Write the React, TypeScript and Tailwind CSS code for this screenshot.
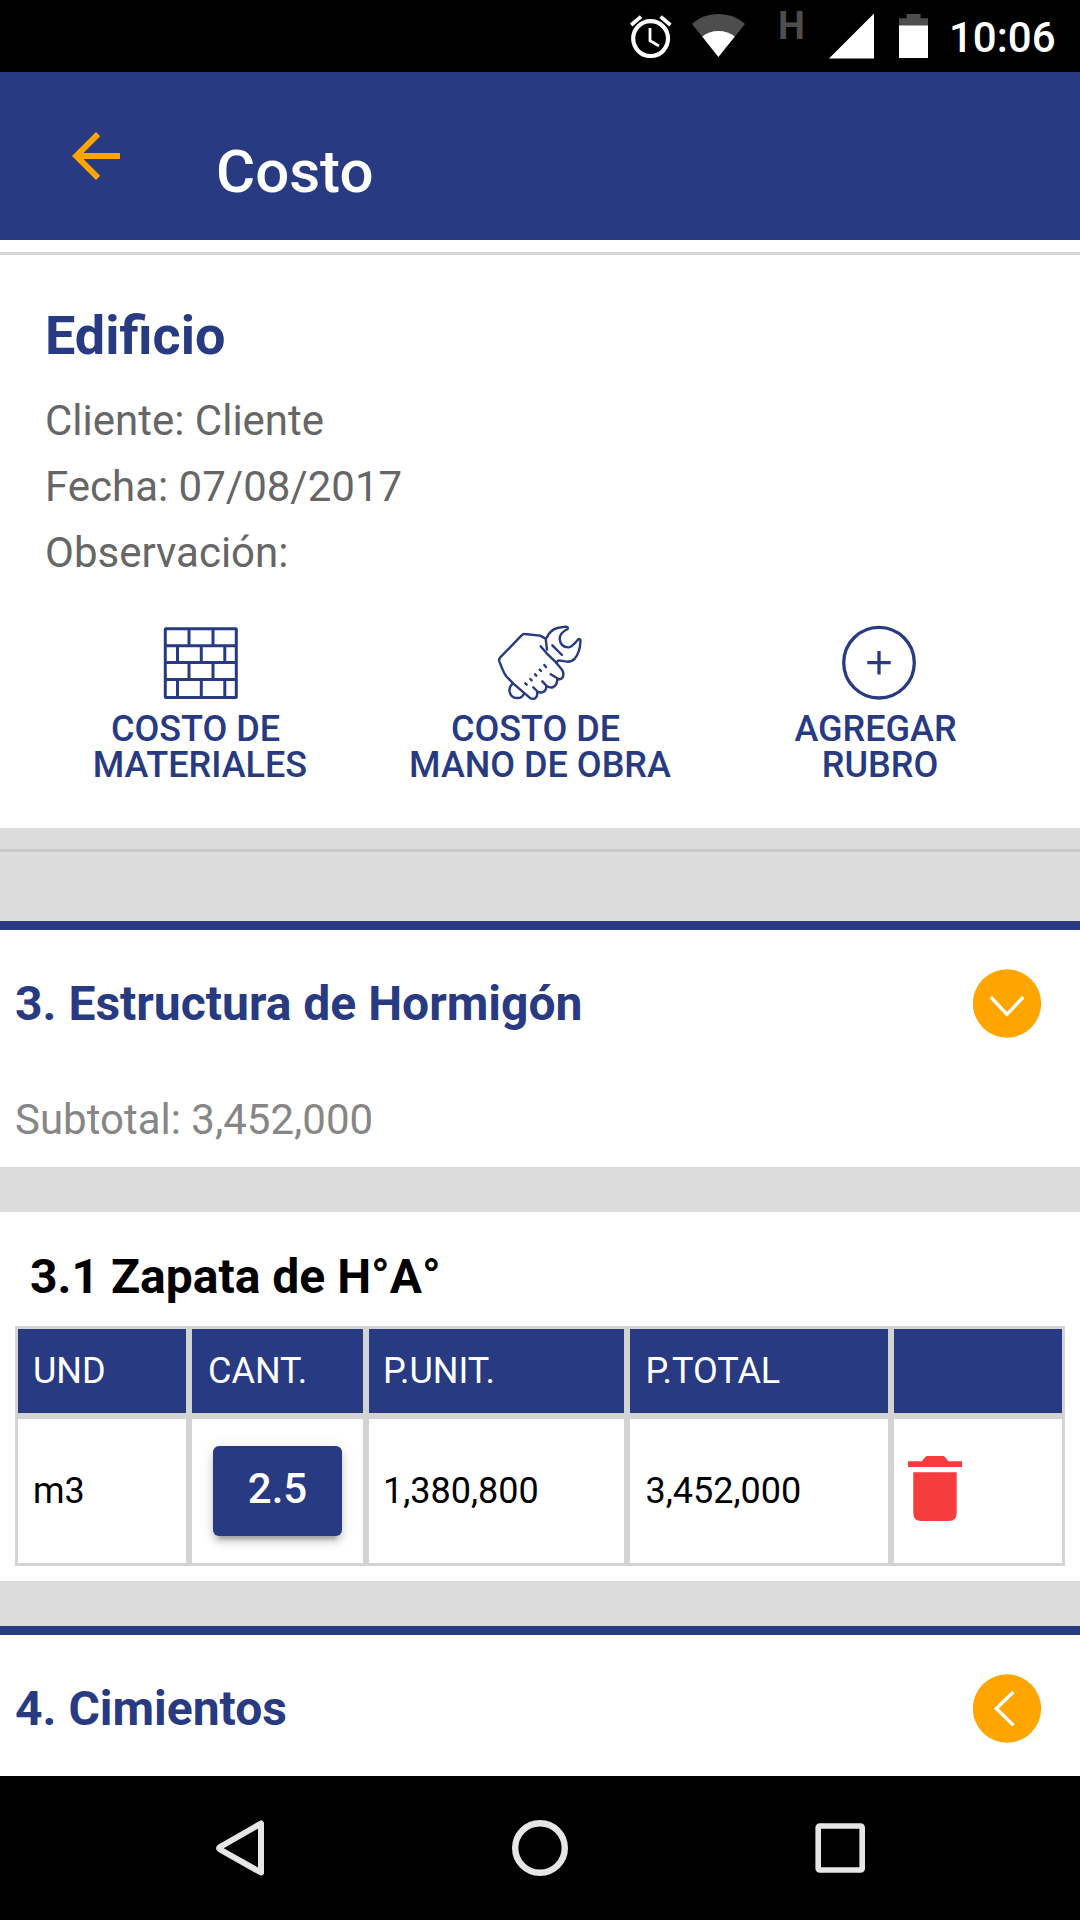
import React from "react";

const WHITE_ROW = "flex items-center justify-between bg-white pl-[15px] pr-[38px]";

function StatusBar() {
  return (
    <div className="flex h-[72px] items-start bg-black pl-[630px] text-white">
      <svg className="mt-[15px] h-[43px] w-[42px] shrink-0" viewBox="630 15 42 43" fill="none">
        <circle cx="650.6" cy="38.6" r="17.4" stroke="#fff" strokeWidth="4.2" />
        <path d="M650 28v12.8l9 5.2" stroke="#fff" strokeWidth="2.8" />
        <path d="M630 23.6l9.8-8.4 2.4 2.8-9.8 8.4zM671.6 23.6l-9.8-8.4-2.4 2.8 9.8 8.4z" fill="#fff" />
      </svg>
      <svg className="ml-[20px] mt-[14px] h-[43px] w-[53px] shrink-0" viewBox="692 14 53 43">
        <path d="M718.4 57L692 24C699 17.500 708 14 718.400 14S738 17.500 745 24z" fill="#4d4d4d" />
        <path d="M718.4 57L702.300 36.500C706.500 33 712 31 718.400 31S730.500 33 734.800 36.500z" fill="#fff" />
      </svg>
      <span className="ml-[33px] mt-[4px] w-[27px] shrink-0 text-[38px] font-bold leading-[45px] text-[#4d4d4d]">H</span>
      <svg className="ml-[24px] mt-[13px] h-[46px] w-[45px] shrink-0" viewBox="829 13 45 46">
        <path d="M829 58.500H874V13.500z" fill="#fff" />
      </svg>
      <svg className="ml-[25px] mt-[14px] h-[44px] w-[29px] shrink-0" viewBox="899 14 29 44">
        <path d="M899 26V18.300h7.500V14h14v4.300h7.500V26z" fill="#4d4d4d" />
        <path d="M899 25.500h29V58H899z" fill="#fff" />
      </svg>
      <span className="ml-[21px] mt-[13px] text-[42px] font-medium leading-[49px]">10:06</span>
    </div>
  );
}

function BrickIcon() {
  return (
    <svg className="h-[78px] w-[76px]" viewBox="0 0 76 78" fill="none" stroke="#283a82" strokeWidth="3">
      <rect x="3.300" y="5.800" width="71" height="68.700" rx="0.500" />
      <path d="M3.500 22.700h71M3.500 39.500h71M3.500 56.500h71" />
      <path d="M27 5.500v17M51 5.500v17M15.500 22.500v17M39.300 22.500v17M62.800 22.500v17M27 39.500v17M51 39.500v17M15.500 56.500v18M39.300 56.500v18M62.800 56.500v18" />
    </svg>
  );
}

function HandIcon() {
  return (
    <svg
      className="h-[78px] w-[88px]"
      viewBox="320 69 264 234"
      fill="none"
      stroke="#283a82"
      strokeWidth="7.200"
      strokeLinecap="round"
      strokeLinejoin="round"
    >
      <path d="M454 139L472 160L497 184L518 209Q525 221 520 232Q514 241 504 235L484 223M504 235Q504 256 492 261Q481 265 471 257L459 244M471 257Q472 274 458 277Q449 279 443 273L432 262M443 273Q446 289 437 295Q429 299 421 293L371 250L350 228Q342 216 330 184Q328 178 332 173L396 107Q401 101 407 102L452 107L469 116L473 149" />
      <path d="M371 250Q358 260 361 276Q366 296 385 294Q398 294 404 281" />
      <path d="M472 113Q482 90 504 84L528 80Q538 80 535 87Q512 98 511 116Q513 143 539 142Q548 140 556 130L568 117Q575 116 573 129Q571 157 557 175Q547 186 533 185L508 181L500 188" />
      <path d="M489 136L518 165" />
      <path d="M408 250l4 4M423 237l4 4M437 223l4 4M451 209l4 4M465 195l5 6" />
    </svg>
  );
}

function PlusIcon() {
  return (
    <svg className="h-[78px] w-[76px]" viewBox="0 0 76 78" fill="none" stroke="#283a82" strokeWidth="3.300">
      <circle cx="37" cy="39.700" r="35.300" />
      <path d="M37 28v23.500M25.300 39.700h23.400" />
    </svg>
  );
}

function Action({ icon, first, second }: { icon: React.ReactNode; first: string; second: string }) {
  return (
    <button className="flex w-[340px] flex-col items-center text-[36px] font-medium leading-[36px] text-[#283a82]">
      {icon}
      <span className="mt-[10px] whitespace-pre">{first + "\u00a0"}</span>
      <span>{second}</span>
    </button>
  );
}

function Toggle({ open }: { open: boolean }) {
  return (
    <svg className="h-[69px] w-[69px]" viewBox="0 0 69 69" fill="none" stroke="#fff" strokeWidth="3.300">
      <circle cx="34" cy="34.500" r="34.200" fill="#ffa500" stroke="none" />
      <path d={open ? "M17.700 28L34 45.300L50.300 28" : "M40.400 18L23.300 34.500L40.400 51.300"} />
    </svg>
  );
}

function Cell({ children, head }: { children?: React.ReactNode; head?: boolean }) {
  return (
    <div
      className={
        head
          ? "flex h-[84px] items-center bg-[#283a82] pl-[15px] text-white"
          : "flex h-[144px] items-center bg-white pl-[15px] text-black"
      }
    >
      {children}
    </div>
  );
}

export default function App() {
  return (
    <div className="flex h-[1920px] w-[1080px] flex-col overflow-hidden bg-white font-['Roboto',sans-serif]">
      <StatusBar />
      <header className="flex h-[168px] items-start bg-[#283a82] pl-[60px]">
        <svg className="mt-12 h-[72px] w-[72px]" viewBox="0 0 24 24" fill="#ffa500">
          <path d="M20 11H7.830l5.590-5.590L12 4l-8 8 8 8 1.410-1.410L7.830 13H20v-2z" />
        </svg>
        <h1 className="ml-[84px] mt-[65px] text-[60px] font-medium leading-[70px] text-white">Costo</h1>
      </header>
      <div className="mt-3 h-[3px] bg-[#d5d5d5]" />

      <section className="flex h-[573px] flex-col">
        <div className="px-[45px] pt-[49px]">
          <h2 className="text-[54px] font-bold leading-[64px] text-[#283a82]">Edificio</h2>
          <div className="mt-[20px] text-[42px] leading-[66px] text-[#666666]">
            <p>Cliente: Cliente</p>
            <p>Fecha: 07/08/2017</p>
            <p>Observación:</p>
          </div>
        </div>
        <div className="mt-[37px] flex px-[30px]">
          <Action icon={<BrickIcon />} first="COSTO DE" second="MATERIALES" />
          <Action icon={<HandIcon />} first="COSTO DE" second="MANO DE OBRA" />
          <Action icon={<PlusIcon />} first="AGREGAR" second="RUBRO" />
        </div>
      </section>

      <div className="h-[93px] bg-[#dcdcdc] pt-[21px]">
        <div className="h-[3px] bg-[#c9c9c9]" />
      </div>

      <section className="h-[246px] border-t-[9px] border-[#283a82]">
        <div className={WHITE_ROW + " h-[147px]"}>
          <h3 className="text-[48px] font-bold leading-[56px] text-[#283a82]">3. Estructura de Hormigón</h3>
          <Toggle open />
        </div>
        <p className="mt-[18px] pl-[15px] text-[42px] leading-[50px] text-[#868686]">Subtotal: 3,452,000</p>
      </section>
      <div className="h-[45px] bg-[#dcdcdc]" />

      <section className="h-[369px] px-[15px]">
        <h4 className="pl-[15px] pt-[37px] text-[48px] font-bold leading-[56px] text-black">3.1 Zapata de H°A°</h4>
        <div className="mt-[21px] grid grid-cols-[168px_171px_255px_258px_168px] gap-[6px] border-[3px] border-[#d3d3d3] bg-[#d3d3d3] text-[36px] leading-[42px]">
          <Cell head>UND</Cell>
          <Cell head>
            <span className="pl-px">CANT.</span>
          </Cell>
          <Cell head>
            <span className="-ml-px">P.UNIT.</span>
          </Cell>
          <Cell head>
            <span className="pl-[0.5px]">P.TOTAL</span>
          </Cell>
          <Cell head />
          <Cell>m3</Cell>
          <Cell>
            <button className="ml-[6px] h-[90px] w-[129px] rounded-[6px] bg-[#283a82] pb-1 text-[42px] font-medium text-white shadow-[0_9px_3px_-6px_rgba(0,0,0,0.2),0_6px_6px_0_rgba(0,0,0,0.14),0_3px_15px_0_rgba(0,0,0,0.12)]">
              2.5
            </button>
          </Cell>
          <Cell>
            <span className="-ml-px">1,380,800</span>
          </Cell>
          <Cell>
            <span className="pl-[0.5px]">3,452,000</span>
          </Cell>
          <Cell>
            <svg className="-ml-px mb-[5px] h-[65px] w-[54px]" viewBox="0 0 54 65" fill="#f53d3d">
              <path d="M0 11V5.300H13.600L18.400 0H36L40.500 5.300H54V11zM5.300 16.200H48.700V57q0 8-8 8H13.300q-8 0-8-8z" />
            </svg>
          </Cell>
        </div>
      </section>
      <div className="h-[45px] bg-[#dcdcdc]" />

      <section className="h-[150px] border-t-[9px] border-[#283a82]">
        <div className={WHITE_ROW + " h-[147px]"}>
          <h3 className="text-[48px] font-bold leading-[56px] text-[#283a82]">4. Cimientos</h3>
          <Toggle open={false} />
        </div>
      </section>

      <nav className="relative z-10 flex h-[144px] shrink-0 items-center bg-black pl-[210px]">
        <svg className="h-[60px] w-[60px]" viewBox="0 0 60 60" fill="none" stroke="#e6e6e6" strokeWidth="6" strokeLinejoin="round">
          <path d="M51 5.500V54.500L10 31.500Q8 30.300 10 29z" />
        </svg>
        <svg className="ml-[240px] h-[60px] w-[60px]" viewBox="0 0 60 60" fill="none" stroke="#e6e6e6" strokeWidth="6.400">
          <circle cx="30" cy="30" r="24.800" />
        </svg>
        <svg className="ml-[240px] h-[60px] w-[60px]" viewBox="0 0 60 60" fill="none" stroke="#e6e6e6" strokeWidth="5.600">
          <rect x="8.200" y="8" width="44" height="44" rx="1.500" />
        </svg>
      </nav>
    </div>
  );
}
